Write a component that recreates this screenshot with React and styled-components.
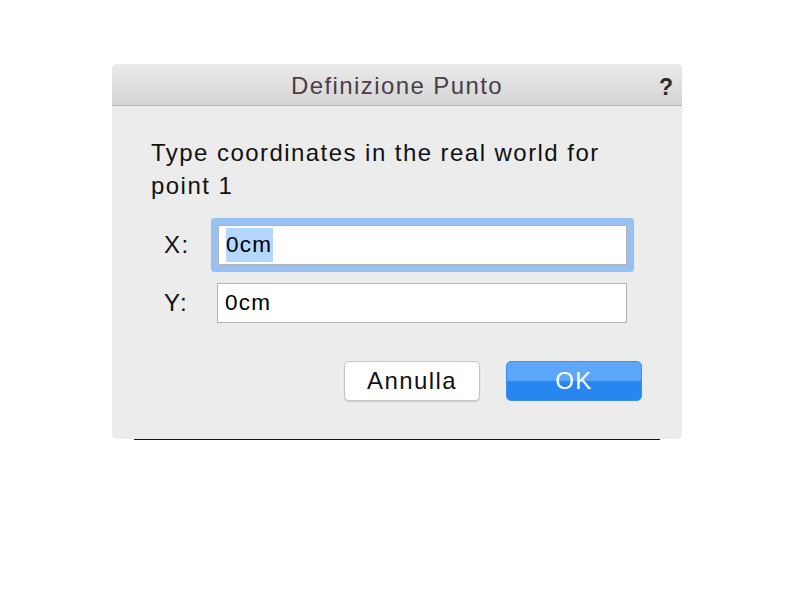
import React from 'react';
import styled, { createGlobalStyle } from 'styled-components';

const GlobalStyle = createGlobalStyle`
	html, body {
		margin: 0;
		background: #ffffff;
	}
	body {
		font-family: "Liberation Sans", Arial, sans-serif;
	}
`;

const Page = styled.div`
	width: 794px;
	height: 600px;
	padding: 64px 0 0 112px;
	box-sizing: border-box;
`;

const Dialog = styled.div`
	width: 570px;
	background: #ececec;
	border-radius: 5px;
	overflow: hidden;
`;

const TitleBar = styled.div`
	height: 42px;
	padding-top: 3px;
	box-sizing: border-box;
	display: flex;
	align-items: center;
	justify-content: center;
	position: relative;
	background: linear-gradient(#ebebeb, #d4d4d4);
	border-bottom: 1px solid #b6b6b6;
`;

const Title = styled.span`
	font-size: 24px;
	letter-spacing: 1.4px;
	color: #4b3d4a;
`;

const Help = styled.span`
	position: absolute;
	right: 9px;
	top: 10px;
	font-size: 23px;
	font-weight: bold;
	color: #2a2a2a;
`;

const Body = styled.div`
	padding: 30px 40px 38px 39px;
`;

const Prompt = styled.p`
	margin: 0 0 23px;
	font-size: 24px;
	letter-spacing: 1.45px;
	line-height: 33px;
	color: #111;
	width: 480px;
`;

const Fields = styled.div`
	display: grid;
	grid-template-columns: 53px 410px;
	row-gap: 18px;
	padding-left: 13px;
	align-items: center;
`;

const Label = styled.label`
	font-size: 24px;
	letter-spacing: 1.4px;
	color: #111;
`;

const Input = styled.div`
	height: 40px;
	box-sizing: border-box;
	background: #fff;
	border: 1px solid #b3b3b3;
	display: flex;
	align-items: center;
	padding-left: 7px;
	font-size: 22.5px;
	letter-spacing: 1.3px;
	color: #000;
	margin-left: ${({ focused }) => (focused ? '1px' : '0')};
	box-shadow: ${({ focused }) => (focused ? '0 0 0 7px #97c1f2' : 'none')};
	border-radius: ${({ focused }) => (focused ? '1px' : '0')};
`;

const Selected = styled.span`
	background: #b3d7ff;
	padding: 4px 1px 4px 0;
`;

const Actions = styled.div`
	display: flex;
	justify-content: flex-end;
	gap: 26px;
	margin-top: 38px;
`;

const Button = styled.div`
	width: 136px;
	height: 40px;
	box-sizing: border-box;
	border-radius: 5px;
	display: flex;
	align-items: center;
	justify-content: center;
	font-size: 24px;
	letter-spacing: 1.4px;
	color: ${({ primary }) => (primary ? '#fff' : '#111')};
	background: ${({ primary }) =>
		primary ? 'linear-gradient(#5ca7f9 0%, #5ca7f9 48%, #2886f0 52%, #2886f0 100%)' : '#fff'};
	border: 1px solid ${({ primary }) => (primary ? '#3a8ff0' : '#c4c4c4')};
	box-shadow: ${({ primary }) => (primary ? 'none' : '0 1px 1px rgba(0,0,0,0.15)')};
`;

const Shadow = styled.div`
	width: 526px;
	height: 1px;
	margin-left: 22px;
	background: #1b0b12;
`;

const App = () => (
	<>
		<GlobalStyle />
		<Page>
			<Dialog>
				<TitleBar>
					<Title>Definizione Punto</Title>
					<Help>?</Help>
				</TitleBar>
				<Body>
					<Prompt>Type coordinates in the real world for point 1</Prompt>
					<Fields>
						<Label>X:</Label>
						<Input focused>
							<Selected>0cm</Selected>
						</Input>
						<Label>Y:</Label>
						<Input>0cm</Input>
					</Fields>
					<Actions>
						<Button>Annulla</Button>
						<Button primary>OK</Button>
					</Actions>
				</Body>
			</Dialog>
			<Shadow />
		</Page>
	</>
);

export default App;
